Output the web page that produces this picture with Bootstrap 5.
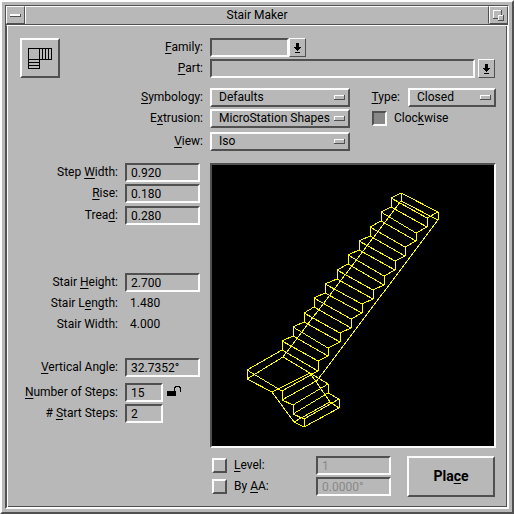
<!DOCTYPE html>
<html lang="en">
<head>
<meta charset="utf-8">
<meta name="viewport" content="width=device-width, initial-scale=1">
<title>Stair Maker</title>
<link href="https://cdn.jsdelivr.net/npm/bootstrap@5.3.0/dist/css/bootstrap.min.css" rel="stylesheet">
<style>
  :root { --face: #b8b8b8; --hi: #fcfcfc; --lo: #505050; }
  body { font-family: Roboto, "Liberation Sans", sans-serif; font-size: 12px; line-height: 19px; color: #000; background: var(--face); }
  .raised, .sunken { border: 2px solid; border-radius: 0; background-color: var(--face); color: #000; }
  .raised { border-color: var(--hi) var(--lo) var(--lo) var(--hi); }
  .sunken { border-color: var(--lo) var(--hi) var(--hi) var(--lo); }
  .thin { border-width: 1px; }
  .window { padding: 3px; }
  .frame { border: 1px solid; border-color: var(--lo) var(--hi) var(--hi) var(--lo); }
  .titlebar { height: 19px; border-bottom: 1px solid var(--lo); }
  .titlebar h1 { font-size: 12px; line-height: 16px; font-weight: 400; border: 1px solid; border-color: var(--hi) var(--lo) transparent var(--hi); }
  .titlebar button { width: 19px; }
  .panel { border: 1px solid; border-color: var(--hi) var(--hi) var(--hi) var(--lo); box-shadow: inset 1px 0 var(--hi), inset -1px -1px var(--lo); padding: 12px 11px 8px 13px; }
  u { text-underline-offset: 2px; text-decoration-thickness: 1px; text-decoration-skip-ink: none; }
  .line { display: flex; align-items: center; height: 19px; margin-bottom: 2px; }
  .line label, .line .name-col { white-space: nowrap; }
  .name-col { text-align: right; flex-shrink: 0; margin-right: 7px; }
  .upper .name-col { width: 143px; }
  .lower .name-col { width: 98px; }
  .gap-xs { margin-bottom: 3px; }
  .gap-s { margin-bottom: 4px; }
  .gap-ms { margin-bottom: 6px; }
  .gap-m { margin-bottom: 10px; }
  .gap-l { margin-bottom: 24px; }
  .gap-xl { margin-bottom: 48px; }
  .form-control.sunken, .form-select.raised { height: 19px; min-height: 0; padding: 0 4px; font-size: 12px; line-height: 15px; color: #000; }
  .form-control.sunken:disabled { color: #888; opacity: 1; background-color: var(--face); }
  .form-select.raised { padding: 0 18px 0 7px; background-repeat: no-repeat; background-position: right 3px center; background-size: 11px 5px;
    background-image: url("data:image/svg+xml,%3Csvg xmlns='http://www.w3.org/2000/svg' width='11' height='5' shape-rendering='crispEdges'%3E%3Cpath fill='%23505050' d='M0 0h11v5H0z'/%3E%3Cpath fill='%23fcfcfc' d='M0 0h10v1H1v3H0z'/%3E%3Cpath fill='%23b8b8b8' d='M1 1h9v3H1z'/%3E%3C/svg%3E"); }
  .menu-wide { width: 140px; flex-shrink: 0; }
  .menu-type { width: 88px; }
  .value { width: 75px; }
  .family { width: 79px; }
  .count { width: 38px; }
  .reading { padding-left: 5px; }
  .pick { width: 17px; height: 19px; }
  .part-pick { margin: 0 1px 0 3px; }
  .tool { width: 40px; height: 40px; }
  .form-check-input.tick { width: 15px; height: 15px; margin: 0 7px 0 0; float: none; flex-shrink: 0; border-radius: 0; background-image: none; }
  .tick.raised { border-color: var(--hi) var(--lo) var(--lo) var(--hi); }
  .tick.sunken { border-color: var(--lo) var(--hi) var(--hi) var(--lo); background-color: #888; }
  .clockwise { width: 124px; }
  .lower { gap: 10px; margin-top: 10px; }
  .preview { background: #000; height: 285px; }
  .options { margin: 8px 1px 0 2px; }
  .place { width: 88px; height: 41px; font-size: 14px; font-weight: 700; }
  svg { display: block; shape-rendering: crispEdges; }
</style>
</head>
<body>
<main class="window raised min-vh-100 d-flex flex-column">
  <div class="frame d-flex flex-column flex-grow-1">
    <header class="titlebar d-flex align-items-stretch">
      <button type="button" class="raised thin p-0 d-flex align-items-center justify-content-center" aria-label="Window menu">
        <svg width="11" height="3" viewBox="0 0 11 3"><path fill="#505050" d="M0 0h11v3H0z"/><path fill="#fcfcfc" d="M0 0h10v2H0z"/></svg>
      </button>
      <h1 class="flex-grow-1 text-center m-0">Stair Maker</h1>
      <button type="button" class="raised thin p-0 d-flex align-items-center justify-content-center" aria-label="Restore">
        <svg width="11" height="11" viewBox="0 0 11 11"><path fill="#505050" d="M0 0h9v9H0z"/><path fill="#fcfcfc" d="M0 0h8v1H1v7H0z"/><path fill="#b8b8b8" d="M1 1h7v7H1z"/><path fill="#505050" d="M5 5h6v6H5z"/><path fill="#fcfcfc" d="M5 5h5v1H6v4H5z"/><path fill="#b8b8b8" d="M6 6h4v4H6z"/></svg>
      </button>
    </header>

    <form class="panel flex-grow-1">
      <section class="upper d-flex">
        <button type="button" class="tool raised p-0 d-flex align-items-center justify-content-center flex-shrink-0" aria-label="Stair plan">
          <svg width="24" height="21" viewBox="0 0 24 21"><path fill="none" stroke="#000" d="M.5 .5h23v11h-23zM.5 .5v20h11v-20M14.5 .5v11M17.5 .5v11M20.5 .5v11M.5 14.5h11M.5 17.5h11"/></svg>
        </button>
        <div class="flex-grow-1">
          <div class="line">
            <label class="name-col" for="family"><u>F</u>amily:</label>
            <input id="family" class="form-control sunken family">
            <button type="button" class="pick raised thin p-0 d-flex justify-content-center align-items-center" aria-label="Choose family"><svg width="7" height="10" viewBox="0 0 7 10"><path d="M2 0h3v4h2v1H6v1H5v1H4v1H3V7H2V6H1V5H0V4h2zM1 9h5v1H1z"/></svg></button>
          </div>
          <div class="line gap-m">
            <label class="name-col" for="part"><u>P</u>art:</label>
            <input id="part" class="form-control sunken flex-grow-1 w-auto">
            <button type="button" class="pick part-pick raised thin p-0 d-flex justify-content-center align-items-center flex-shrink-0" aria-label="Choose part"><svg width="7" height="10" viewBox="0 0 7 10"><path d="M2 0h3v4h2v1H6v1H5v1H4v1H3V7H2V6H1V5H0V4h2zM1 9h5v1H1z"/></svg></button>
          </div>
          <div class="line">
            <label class="name-col" for="symbology"><u>S</u>ymbology:</label>
            <select id="symbology" class="form-select raised menu-wide"><option>Defaults</option></select>
            <label class="ms-auto me-2" for="type"><u>T</u>ype:</label>
            <select id="type" class="form-select raised menu-type"><option>Closed</option></select>
          </div>
          <div class="line gap-s">
            <label class="name-col" for="extrusion">E<u>x</u>trusion:</label>
            <select id="extrusion" class="form-select raised menu-wide"><option>MicroStation Shapes</option></select>
            <div class="clockwise d-flex align-items-center ms-auto">
              <input type="checkbox" id="clockwise" class="form-check-input tick sunken">
              <label for="clockwise">Cloc<u>k</u>wise</label>
            </div>
          </div>
          <div class="line">
            <label class="name-col" for="view"><u>V</u>iew:</label>
            <select id="view" class="form-select raised menu-wide"><option>Iso</option></select>
          </div>
        </div>
      </section>

      <section class="lower d-flex">
        <div>
          <div class="line"><label class="name-col" for="stepwidth">Step <u>W</u>idth:</label><input id="stepwidth" class="form-control sunken value" value="0.920"></div>
          <div class="line gap-xs"><label class="name-col" for="rise"><u>R</u>ise:</label><input id="rise" class="form-control sunken value" value="0.180"></div>
          <div class="line gap-xl"><label class="name-col" for="tread">Trea<u>d</u>:</label><input id="tread" class="form-control sunken value" value="0.280"></div>
          <div class="line"><label class="name-col" for="height">Stair <u>H</u>eight:</label><input id="height" class="form-control sunken value" value="2.700"></div>
          <div class="line"><label class="name-col" for="length">Stair L<u>e</u>ngth:</label><output id="length" class="reading">1.480</output></div>
          <div class="line gap-l"><label class="name-col" for="width">Stair Width:</label><output id="width" class="reading">4.000</output></div>
          <div class="line gap-ms"><label class="name-col" for="angle"><u>V</u>ertical Angle:</label><input id="angle" class="form-control sunken value" value="32.7352°"></div>
          <div class="line"><label class="name-col" for="steps"><u>N</u>umber of Steps:</label><input id="steps" class="form-control sunken count" value="15">
            <svg class="ms-1 mb-1" width="14" height="10" viewBox="0 0 14 10" role="img" aria-label="Unlocked"><path d="M0 5h9v5H0z"/><path fill="none" stroke="#000" d="M7.500 5V1.500h1V.5h4v1h1V6"/></svg>
          </div>
          <div class="line"><label class="name-col" for="start"># <u>S</u>tart Steps:</label><input id="start" class="form-control sunken count" value="2"></div>
        </div>

        <div class="flex-grow-1">
          <div class="preview sunken">
            <svg width="100%" height="100%" viewBox="212 165 282 281" role="img" aria-label="Isometric stair preview">
              <g fill="none" stroke="#ff0" stroke-width="1">
                <path d="M401 193L391 198V207L381 212V221L370 227V236L359 241V250L348 255V264L337 270V279L325 284V293L314 298V307L304 313V322L293 327V336L282 341V350L247 370V379"/>
                <path d="M401 193L438 212V220M438 212L427 218V227L416 233V241L405 247V256L395 261V270L384 276V285L373 290V299L362 304V313L351 319V328L340 333V342L328 348V356L318 361V371"/>
                <path d="M391 198L427 218M391 207L427 227M381 212L416 233M381 221L416 241M370 227L405 247M370 236L405 256M359 241L395 261M359 250L395 270M348 255L384 276M348 264L384 285M337 270L373 290M337 279L373 299M325 284L362 304M325 293L362 313M314 298L351 319M314 307L351 328M304 313L340 333M304 322L340 342M293 327L328 348M293 336L328 356M282 341L318 361M282 350L318 371"/>
                <path d="M401 193V201L438 220L316 382M401 201L283 357L310 373L328 384V393L339 399V408L304 427V419L293 414V405L282 400V391L247 370"/>
                <path d="M247 379L283 357M247 379L272 392L310 373M282 391L318 371M282 400L318 380M293 405L328 384M293 414L328 393M304 419L339 399M272 392L294 422L304 427M294 422L330 402L339 408M310 373L330 402M276 389H280"/>
              </g>
            </svg>
          </div>
          <div class="options d-flex justify-content-between">
            <div>
              <div class="line">
                <input type="checkbox" id="uselevel" class="form-check-input tick raised"><label for="uselevel"><u>L</u>evel:</label>
              </div>
              <div class="line">
                <input type="checkbox" id="useaa" class="form-check-input tick raised"><label for="useaa">By <u>A</u>A:</label>
              </div>
            </div>
            <div class="ms-auto me-3">
              <div class="line"><input class="form-control sunken value" aria-label="Level" value="1" disabled></div>
              <div class="line"><input class="form-control sunken value" aria-label="Active angle" value="0.0000°" disabled></div>
            </div>
            <button type="button" class="place raised p-0">Pla<u>c</u>e</button>
          </div>
        </div>
      </section>
    </form>
  </div>
</main>
<script src="https://cdn.jsdelivr.net/npm/bootstrap@5.3.0/dist/js/bootstrap.bundle.min.js"></script>
</body>
</html>
